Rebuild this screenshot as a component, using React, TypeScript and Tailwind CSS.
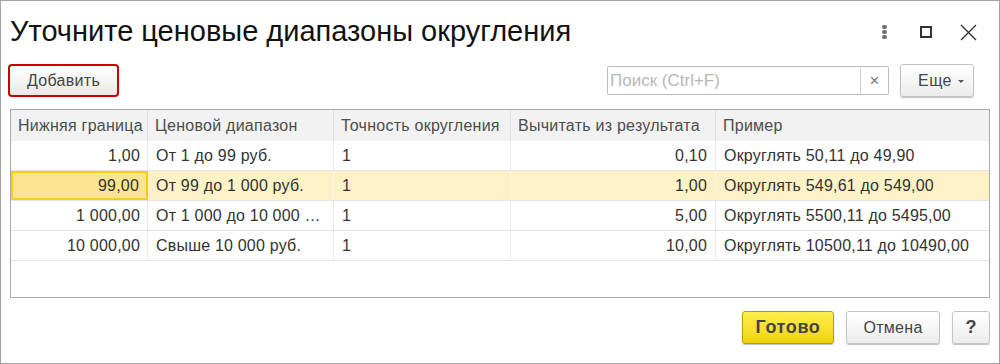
type Row = {
  low: string;
  range: string;
  prec: string;
  sub: string;
  example: string;
};

const ROWS: Row[] = [
  { low: "1,00", range: "От 1 до 99 руб.", prec: "1", sub: "0,10", example: "Округлять 50,11 до 49,90" },
  { low: "99,00", range: "От 99 до 1 000 руб.", prec: "1", sub: "1,00", example: "Округлять 549,61 до 549,00" },
  { low: "1 000,00", range: "От 1 000 до 10 000 …", prec: "1", sub: "5,00", example: "Округлять 5500,11 до 5495,00" },
  { low: "10 000,00", range: "Свыше 10 000 руб.", prec: "1", sub: "10,00", example: "Округлять 10500,11 до 10490,00" },
];

const HEADERS = ["Нижняя граница", "Ценовой диапазон", "Точность округления", "Вычитать из результата", "Пример"];

const COLS = "grid grid-cols-[137px_186px_177px_205px_1fr]";

export default function App() {
  const selected = 1;

  return (
    <div className="w-[1000px] h-[364px] bg-white border border-[#a3a3a3] flex flex-col font-['Liberation_Sans',Arial,sans-serif] overflow-hidden">
      {/* Заголовок */}
      <div className="h-[62px] shrink-0 flex items-center pl-[9px]">
        <h1 className="flex-1 text-[29px] text-[#111] leading-none pb-[1px]">
          Уточните ценовые диапазоны округления
        </h1>
        <div className="flex items-center h-full">
          <div className="w-[42px] flex flex-col items-center gap-[1px]">
            <span className="w-[5px] h-[4px] rounded-full bg-[#6e6e6e]" />
            <span className="w-[5px] h-[4px] rounded-full bg-[#6e6e6e]" />
            <span className="w-[5px] h-[4px] rounded-full bg-[#6e6e6e]" />
          </div>
          <div className="w-[42px] flex justify-center">
            <span className="w-[12px] h-[12px] border-2 border-[#333]" />
          </div>
          <div className="w-[42px] flex justify-center mr-[10px]">
            <svg width="17" height="17" viewBox="0 0 17 17">
              <path d="M1 1 L16 16 M16 1 L1 16" stroke="#333" strokeWidth="1.4" fill="none" />
            </svg>
          </div>
        </div>
      </div>

      {/* Панель команд */}
      <div className="h-[35px] shrink-0 flex items-start pl-[7px] pr-[25px] pt-[1px]">
        <button className="h-[33px] w-[111px] rounded-[4px] border-2 border-[#cc0000] bg-gradient-to-b from-white to-[#e9e9e9] text-[16px] tracking-[0.3px] text-[#444]">
          Добавить
        </button>
        <div className="flex-1" />
        <div className="mt-[2px] h-[29px] w-[282px] flex border border-[#bdbdbd] rounded-[2px]">
          <div className="flex-1 flex items-center pl-[2px] text-[17px] text-[#b8b8b8]">Поиск (Ctrl+F)</div>
          <div className="w-[28px] border-l border-[#cfcfcf] flex items-center justify-center text-[17px] text-[#777]">
            ×
          </div>
        </div>
        <button className="ml-[11px] h-[33px] w-[74px] rounded-[3px] border border-[#c4c4c4] bg-gradient-to-b from-white to-[#ececec] shadow-[0_1px_1px_rgba(0,0,0,0.25)] text-[16px] tracking-[0.4px] text-[#444] flex items-center justify-center gap-[6px] pl-[8px]">
          Еще
          <span className="w-0 h-0 border-l-[3px] border-r-[3px] border-t-[3px] border-l-transparent border-r-transparent border-t-[#555] mt-[1px]" />
        </button>
      </div>

      {/* Таблица */}
      <div className="mt-[11px] mx-[9px] h-[189px] shrink-0 border border-[#a9a9a9] text-[16px]">
        <div className={`${COLS} h-[31px] bg-[#f2f2f2] text-[#4d4d4d] tracking-[0.25px]`}>
          {HEADERS.map((h, i) => (
            <div
              key={h}
              className={`flex items-center px-[7px] whitespace-nowrap overflow-hidden ${i < 4 ? "border-r border-[#dedede]" : ""}`}
            >
              {h}
            </div>
          ))}
        </div>
        {ROWS.map((r, idx) => {
          const sel = idx === selected;
          const cell = `flex items-center px-[8px] whitespace-nowrap overflow-hidden ${sel ? "border-r border-[#fbf7e6]" : "border-r border-[#ececec]"}`;
          return (
            <div
              key={r.low}
              className={`${COLS} h-[30px] border-b border-[#e4e4e4] text-[#333] tracking-[0.2px] ${sel ? "bg-[#fdf2c6]" : "bg-white"}`}
            >
              <div
                className={`flex items-center justify-end pr-[7px] ${
                  sel ? "bg-[#fde490] border-2 border-[#f9cc1c]" : "border-r border-[#ececec]"
                }`}
              >
                {r.low}
              </div>
              <div className={cell}>{r.range}</div>
              <div className={cell}>{r.prec}</div>
              <div className={`${cell} justify-end`}>{r.sub}</div>
              <div className="flex items-center px-[8px] whitespace-nowrap">{r.example}</div>
            </div>
          );
        })}
      </div>

      {/* Кнопки формы */}
      <div className="mt-[13px] flex justify-end gap-[12px] pr-[9px]">
        <button className="h-[33px] w-[92px] rounded-[3px] border border-[#b59e00] bg-gradient-to-b from-[#fff04a] to-[#f0d200] shadow-[0_1px_1px_rgba(0,0,0,0.25)] text-[18px] tracking-[0.6px] font-bold text-[#444]">
          Готово
        </button>
        <button className="h-[33px] w-[94px] rounded-[3px] border border-[#c4c4c4] bg-gradient-to-b from-white to-[#ececec] shadow-[0_1px_1px_rgba(0,0,0,0.25)] text-[16px] tracking-[0.3px] text-[#444]">
          Отмена
        </button>
        <button className="h-[33px] w-[38px] rounded-[3px] border border-[#c4c4c4] bg-gradient-to-b from-white to-[#ececec] shadow-[0_1px_1px_rgba(0,0,0,0.25)] text-[18px] font-bold text-[#444]">
          ?
        </button>
      </div>
    </div>
  );
}
